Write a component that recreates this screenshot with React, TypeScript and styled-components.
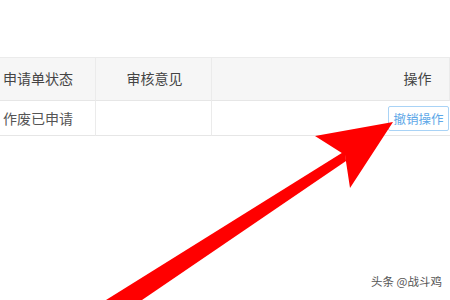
import React from "react";
import styled, { createGlobalStyle } from "styled-components";

const GlobalStyle = createGlobalStyle`
  html, body {
    margin: 0;
    padding: 0;
    background: #fff;
  }
  body {
    font-family: "Noto Sans CJK SC", "Noto Sans", sans-serif;
  }
`;

const StyledPage = styled.div`
  position: relative;
  width: 450px;
  height: 300px;
  overflow: hidden;
  background: #fff;
  padding-top: 57px;
  box-sizing: border-box;
`;

const StyledTable = styled.div`
  display: grid;
  grid-template-columns: 96px 116px 1fr;
  border-top: 1px solid #ebebeb;
`;

const StyledHead = styled.div<{ $align: string }>`
  height: 40px;
  display: flex;
  align-items: center;
  justify-content: ${(p) => p.$align};
  background: #f6f6f6;
  color: #444;
  font-size: 14px;
  border-bottom: 1px solid #e6e6e6;
  border-right: 1px solid #ebebeb;
  padding: 0 1px 2px 3px;

  &:last-child {
    border-right: none;
  }
`;

const StyledCell = styled.div<{ $align: string }>`
  height: 34px;
  display: flex;
  align-items: center;
  justify-content: ${(p) => p.$align};
  color: #555;
  font-size: 14px;
  border-bottom: 1px solid #e6e6e6;
  border-right: 1px solid #ebebeb;
  padding: 0 1px 0 3px;

  &:last-child {
    border-right: none;
  }
`;

const StyledAction = styled.div`
  width: 61px;
  text-align: center;
`;

const StyledButton = styled.button`
  width: 61px;
  height: 25px;
  padding: 0;
  margin-top: 1px;
  border: 1px solid #a9d3f6;
  border-radius: 2px;
  background: #fff;
  color: #5ea8e8;
  font-family: inherit;
  font-size: 12.5px;
  cursor: pointer;
`;

const StyledArrow = styled.svg`
  position: absolute;
  left: 0;
  top: 0;
`;

const StyledMark = styled.div`
  position: absolute;
  right: 8px;
  bottom: 11px;
  font-size: 11.5px;
  color: #555;
  text-shadow: 0 0 2px #fff;
`;

function App() {
  return (
    <StyledPage>
      <GlobalStyle />
      <StyledTable>
        <StyledHead $align="flex-start">申请单状态</StyledHead>
        <StyledHead $align="center">审核意见</StyledHead>
        <StyledHead $align="flex-end">
          <StyledAction>操作</StyledAction>
        </StyledHead>
        <StyledCell $align="flex-start">作废已申请</StyledCell>
        <StyledCell $align="center"></StyledCell>
        <StyledCell $align="flex-end">
          <StyledButton>撤销操作</StyledButton>
        </StyledCell>
      </StyledTable>
      <StyledArrow width="450" height="300" viewBox="0 0 450 300">
        <polygon points="106,300 345,151 346,161 142,300" fill="#ff0000" />
        <polygon points="393,122 315,136 345,155 350,188" fill="#ff0000" />
      </StyledArrow>
      <StyledMark>头条 @战斗鸡</StyledMark>
    </StyledPage>
  );
}

export default App;
